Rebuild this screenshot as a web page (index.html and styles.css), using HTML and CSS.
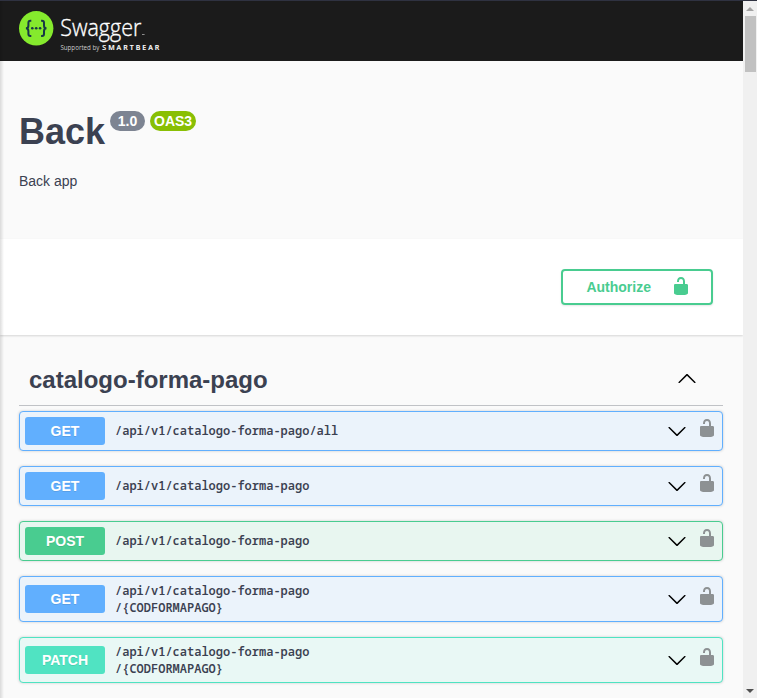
FILE: index.html
```
<!DOCTYPE html>
<html lang="en">
<head>
<meta charset="utf-8">
<title>Swagger UI</title>
<link rel="stylesheet" href="styles.css">
</head>
<body>
<svg class="defs" aria-hidden="true">
  <symbol id="unlocked" viewBox="0 0 20 20"><path d="M15.8 8H14V5.6C14 2.703 12.665 1 10 1 7.334 1 6 2.703 6 5.6V6h2v-.801C8 3.754 8.797 3 10 3c1.203 0 2 .754 2 2.199V8H4c-.553 0-1 .646-1 1.199V17c0 .549.428 1.139.951 1.307l1.197.387C5.672 18.861 6.55 19 7.1 19h5.8c.549 0 1.428-.139 1.951-.307l1.196-.387c.524-.167.953-.757.953-1.306V9.199C17 8.646 16.352 8 15.8 8z"/></symbol>
  <symbol id="arrow" viewBox="0 0 20 20"><path d="M17.418 6.109c.272-.268.709-.268.979 0s.271.701 0 .969l-7.908 7.83c-.27.268-.707.268-.979 0l-7.908-7.83c-.27-.268-.271-.701 0-.969s.709-.268.979 0L10 13.25z"/></symbol>
</svg>
<div class="window">
  <div class="page">
    <header class="topbar">
      <svg class="mark" viewBox="0 0 35 35">
        <circle cx="17.2" cy="17.3" r="17.2" fill="#85ea2d"/>
        <g fill="none" stroke="#173647" stroke-width="2">
          <path d="M12.3 9.7h-.9q-2 0-2 2v2.7q0 2.9-2.5 2.9 2.5 0 2.5 2.9v2.7q0 2 2 2h.9"/>
          <path d="M22.1 9.7h.9q2 0 2 2v2.7q0 2.9 2.5 2.9-2.5 0-2.5 2.9v2.7q0 2-2 2h-.9"/>
        </g>
        <g fill="#173647"><circle cx="13.3" cy="17.3" r="1.3"/><circle cx="17.2" cy="17.3" r="1.3"/><circle cx="21.1" cy="17.3" r="1.3"/></g>
      </svg>
      <svg class="wordmark" viewBox="0 0 110 42">
        <text class="name" x="0.3" y="24.8" textLength="81" lengthAdjust="spacingAndGlyphs">Swagger</text>
        <path d="M82 23.5h2.6" stroke="#aaa" stroke-width=".8"/>
        <text class="by" x="0.4" y="38.6" textLength="39" lengthAdjust="spacingAndGlyphs">Supported by</text>
        <text class="maker" x="42.3" y="38.5" textLength="57" lengthAdjust="spacing">SMARTBEAR</text>
      </svg>
    </header>
    <section class="info">
      <h1>Back<span class="badges"><span class="badge">1.0</span><span class="badge oas">OAS3</span></span></h1>
      <p>Back app</p>
    </section>
    <section class="schemes">
      <button class="authorize">Authorize<svg class="icon"><use href="#unlocked"/></svg></button>
    </section>
    <main class="operations">
      <h2>catalogo-forma-pago<svg class="icon up"><use href="#arrow"/></svg></h2>
      <div class="op get"><span class="method">GET</span><span class="path">/api/v1/catalogo-forma-pago/all</span><svg class="icon"><use href="#arrow"/></svg><svg class="icon lock"><use href="#unlocked"/></svg></div>
      <div class="op get"><span class="method">GET</span><span class="path">/api/v1/catalogo-forma-pago</span><svg class="icon"><use href="#arrow"/></svg><svg class="icon lock"><use href="#unlocked"/></svg></div>
      <div class="op post"><span class="method">POST</span><span class="path">/api/v1/catalogo-forma-pago</span><svg class="icon"><use href="#arrow"/></svg><svg class="icon lock"><use href="#unlocked"/></svg></div>
      <div class="op get"><span class="method">GET</span><span class="path">/api/v1/catalogo-forma-pago<br>/{CODFORMAPAGO}</span><svg class="icon"><use href="#arrow"/></svg><svg class="icon lock"><use href="#unlocked"/></svg></div>
      <div class="op patch"><span class="method">PATCH</span><span class="path">/api/v1/catalogo-forma-pago<br>/{CODFORMAPAGO}</span><svg class="icon"><use href="#arrow"/></svg><svg class="icon lock"><use href="#unlocked"/></svg></div>
    </main>
  </div>
  <div class="scrollbar">
    <span class="tri top"></span>
    <span class="thumb"></span>
    <span class="tri bottom"></span>
  </div>
</div>
</body>
</html>
```
FILE: styles.css
```
* { box-sizing: border-box; }
body {
  margin: 0;
  height: 698px;
  overflow: hidden;
  font-family: "Liberation Sans", Arial, sans-serif;
  color: #3b4151;
  background: #fafafa;
}
.defs { display: none; }
.window {
  display: flex;
  height: 698px;
  border-top: 1px solid #2f3241;
  position: relative;
}
.window::before {
  content: "";
  position: absolute;
  z-index: 2;
  inset: 0 auto 0 0;
  width: 4px;
  background: linear-gradient(90deg, rgba(0,0,0,.13), rgba(0,0,0,0));
}
.page { flex: 1; min-width: 0; }
.topbar {
  display: flex;
  height: 60px;
  padding: 10px 19px 0;
  background: #1b1b1b;
}
.mark { width: 35px; height: 35px; flex: none; }
.wordmark { width: 110px; height: 42px; margin-left: 6px; fill: #fff; }
.name { font: 300 23.5px "Open Sans", sans-serif; stroke: #fff; stroke-width: .35px; }
.by { font: 400 6.5px "Open Sans", sans-serif; fill: #ccc; }
.maker { font: 600 7px "Open Sans", sans-serif; stroke: #fff; stroke-width: .15px; }
.info { height: 178px; padding: 50px 19px 0; }
h1 {
  display: flex;
  align-items: flex-start;
  margin: 0;
  font-size: 36px;
  line-height: 41px;
}
.badges { display: flex; gap: 5px; margin-left: 5px; }
.badge {
  height: 20px;
  width: 35px;
  border-radius: 20px;
  background: #7d8492;
  color: #fff;
  font-size: 14px;
  line-height: 20px;
  text-align: center;
}
.oas { width: 46px; background: #89bf04; }
.info p { margin: 21px 0 0; font-size: 14px; line-height: 16px; }
.schemes {
  display: flex;
  justify-content: flex-end;
  height: 96px;
  padding: 30px 30px 0;
  background: #fff;
  box-shadow: 0 1px 2px rgba(0,0,0,.15);
}
.authorize {
  display: flex;
  align-items: center;
  justify-content: space-between;
  width: 152px;
  height: 36px;
  padding: 0 20px 0 23.4px;
  border: 2px solid #49cc90;
  border-radius: 4px;
  background: transparent;
  box-shadow: 0 1px 2px rgba(0,0,0,.1);
  color: #49cc90;
  fill: #49cc90;
  font: 700 14px "Liberation Sans", Arial, sans-serif;
}
.icon { width: 20px; height: 20px; flex: none; }
.authorize .icon { margin-bottom: 2px; }
.operations { padding: 20px 20px 0 19px; }
h2 {
  display: flex;
  align-items: center;
  justify-content: space-between;
  height: 51px;
  margin: 0 0 5px;
  padding: 0 26px 0 10px;
  border-bottom: 1px solid rgba(59,65,81,.3);
  font-size: 24px;
}
.up { transform: rotate(180deg); fill: #000; margin-top: -3px; }
.op {
  display: flex;
  align-items: center;
  min-height: 40px;
  margin-bottom: 15px;
  padding: 5px;
  border: 1px solid var(--c);
  border-radius: 4px;
  background: var(--bg);
  box-shadow: 0 0 3px rgba(0,0,0,.19);
}
.get { --c: #61affe; --bg: #ebf3fb; }
.post { --c: #49cc90; --bg: #e8f6f0; }
.patch { --c: #50e3c2; --bg: #e9f8f5; }
.method {
  width: 80px;
  height: 28px;
  border-radius: 3px;
  background: var(--c);
  color: #fff;
  font-size: 14px;
  font-weight: 700;
  line-height: 28px;
  text-align: center;
  text-shadow: 0 1px 0 rgba(0,0,0,.1);
}
.path {
  flex: 1;
  padding: 0 0 .1px 10px;
  font: 600 12px/17px "Noto Sans Mono", "DejaVu Sans Mono", monospace;
}
.lock { margin: -6px 0 0 10px; fill: #8d9193; }
.scrollbar {
  display: flex;
  flex-direction: column;
  align-items: center;
  width: 14px;
  background: #f0f0f0;
}
.tri { border: 4px solid transparent; }
.top { border-top: 0; border-bottom-color: #a3a3a3; margin: 6px 0 5px; }
.thumb { width: 11px; height: 56px; margin-left: 1px; background: #c1c1c1; }
.bottom { border-bottom: 0; border-top-color: #505050; margin: auto 0 5px; }
```
